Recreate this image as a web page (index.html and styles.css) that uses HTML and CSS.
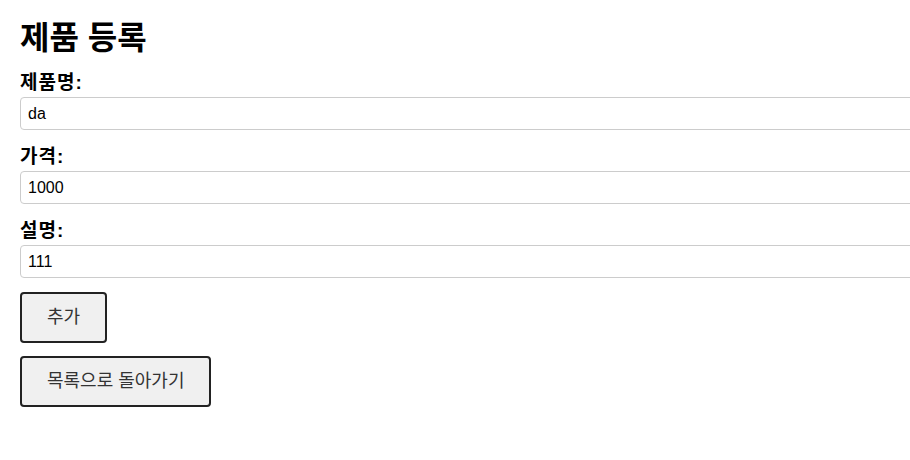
FILE: index.html
```html
<!DOCTYPE html>
<html lang="ko">
<head>
<meta charset="utf-8">
<title>제품 등록</title>
<link rel="stylesheet" href="styles.css">
</head>
<body>
<div class="page">
  <h1 class="title">제품 등록</h1>
  <form class="form">
    <div class="group">
      <label class="label" for="name">제품명:</label>
      <input class="field" id="name" type="text" value="da">
    </div>
    <div class="group">
      <label class="label" for="price">가격:</label>
      <input class="field" id="price" type="text" value="1000">
    </div>
    <div class="group">
      <label class="label" for="desc">설명:</label>
      <input class="field" id="desc" type="text" value="111">
    </div>
    <button class="btn" type="button">추가</button>
  </form>
  <button class="btn" type="button">목록으로 돌아가기</button>
</div>
</body>
</html>
```

FILE: styles.css
```css
html, body {
  margin: 0;
  padding: 0;
  overflow: hidden;
  background: #fff;
}
body {
  font-family: "Liberation Sans", "Noto Sans CJK KR", sans-serif;
  color: #000;
}
.page {
  padding: 19px 0 19px 20px;
}
.title {
  margin: 0 0 13px;
  font-size: 32px;
  line-height: 38px;
  font-weight: 700;
}
.form {
  margin: 0;
}
.group {
  margin-bottom: 14px;
}
.label {
  display: block;
  font-size: 19px;
  line-height: 22px;
  letter-spacing: 1px;
  font-weight: 700;
  padding-top: 2px;
  margin-bottom: 3px;
}
.field {
  display: block;
  width: 100%;
  margin: 0;
  padding: 6px 7px;
  font-family: "Liberation Sans", "Noto Sans CJK KR", sans-serif;
  font-size: 16px;
  line-height: 19px;
  color: #000;
  border: 1px solid #ccc;
  border-radius: 4px;
  background: #fff;
}
.btn {
  display: block;
  margin: 0 0 13px;
  padding: 14px 25px;
  font-family: "Liberation Sans", "Noto Sans CJK KR", sans-serif;
  font-size: 18px;
  line-height: 19px;
  color: #333;
  background: #f0f0f0;
  border: 2px solid #222;
  border-radius: 4px;
}
```
